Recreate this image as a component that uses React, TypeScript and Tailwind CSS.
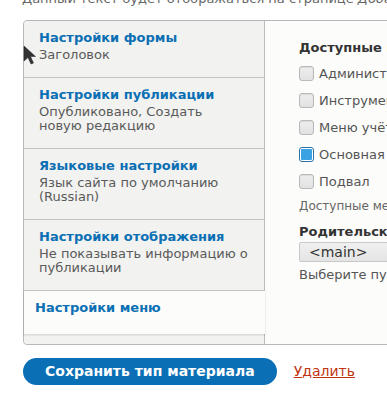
import React from "react";

const tabs = [
  { title: "Настройки формы", desc: ["Заголовок"] },
  { title: "Настройки публикации", desc: ["Опубликовано, Создать", "новую редакцию"] },
  { title: "Языковые настройки", desc: ["Язык сайта по умолчанию", "(Russian)"] },
  { title: "Настройки отображения", desc: ["Не показывать информацию о", "публикации"] },
];

const menus = [
  { label: "Администраторы", checked: false },
  { label: "Инструменты", checked: false },
  { label: "Меню учётной записи", checked: false },
  { label: "Основная навигация", checked: true },
  { label: "Подвал", checked: false },
];

function Checkbox({ checked }: { checked: boolean }) {
  if (checked) {
    return (
      <span className="w-[15px] h-[15px] shrink-0 rounded-[3px] border border-[#2a72a8] bg-white p-[1px] flex">
        <span className="flex-1 rounded-[1px] bg-[#3aa3e3]" />
      </span>
    );
  }
  return (
    <span className="w-[15px] h-[15px] shrink-0 rounded-[3px] border border-[#b9b9b9] bg-gradient-to-b from-[#eeeeee] to-[#e2e2e2] shadow-[inset_0_1px_1px_rgba(0,0,0,0.08)]" />
  );
}

export default function App() {
  return (
    <div className="relative w-[387px] h-[402px] overflow-hidden bg-white font-['DejaVu_Sans',sans-serif]">
      <p className="-mt-[10px] ml-[22px] text-[13px] leading-[18px] text-[#666] whitespace-nowrap">
        Данный текст будет отображаться на странице <em>Добавить материал</em>.
      </p>

      <div className="mt-[12px] ml-[23px] w-[620px] flex border border-[#b8b8b8] rounded-[4px] bg-[#fcfcfa]">
        <ul className="w-[241px] shrink-0 bg-[#f2f2f0] border-r border-[#bcbcbc] pb-[10px] rounded-l-[4px]">
          {tabs.map((t) => (
            <li key={t.title} className="pl-[15px] pt-[9px] pb-[15px] border-b border-[#c4c4c4]">
              <div className="text-[13px] leading-[16px] font-bold text-[#0b6fb4] whitespace-nowrap">{t.title}</div>
              <div className="mt-[2px] text-[13px] leading-[14px] text-[#5a5a5a]">
                {t.desc.map((d) => (
                  <div key={d} className="whitespace-nowrap">{d}</div>
                ))}
              </div>
            </li>
          ))}
          <li className="relative -mr-px pl-[11px] pt-[9px] pb-[18px] bg-[#fcfcfa] shadow-[0_1px_2px_rgba(0,0,0,0.15)]">
            <div className="text-[13px] leading-[16px] font-bold text-[#0b6fb4] whitespace-nowrap">Настройки меню</div>
          </li>
        </ul>

        <div className="flex-1 pl-[34px] pt-[19px] text-[#555]">
          <div className="text-[13px] leading-[16px] font-bold text-[#333] whitespace-nowrap">Доступные меню</div>
          <div className="mt-[4px]">
            {menus.map((m) => (
              <div key={m.label} className="h-[27px] flex items-center gap-[5px]">
                <Checkbox checked={m.checked} />
                <span className="text-[13px] text-[#555] whitespace-nowrap">{m.label}</span>
              </div>
            ))}
          </div>
          <div className="mt-[4px] text-[12px] leading-[15px] text-[#666] whitespace-nowrap">
            Доступные меню, в которых можно размещать ссылки на этот тип материала.
          </div>
          <div className="mt-[10px] text-[13px] leading-[16px] font-bold text-[#333] whitespace-nowrap">
            Родительский пункт меню по умолчанию
          </div>
          <div className="mt-[2px] h-[20px] w-[260px] flex items-center pl-[9px] rounded-[2px] border border-[#c8c8c8] bg-gradient-to-b from-[#f0f0f0] to-[#e4e4e4] text-[14px] text-[#333]">
            &lt;main&gt;
          </div>
          <div className="mt-[4px] text-[13px] leading-[18px] text-[#555] whitespace-nowrap">
            Выберите пункт, который будет родительским по умолчанию.
          </div>
        </div>
      </div>

      <div className="mt-[13px] ml-[23px] flex items-center gap-[17px]">
        <button className="h-[27px] px-[22px] rounded-full bg-[#0a6fb5] text-white text-[14px] font-bold whitespace-nowrap">
          Сохранить тип материала
        </button>
        <a className="text-[14px] text-[#c1330f] underline whitespace-nowrap">Удалить</a>
      </div>

      <svg className="absolute left-[22px] top-[44px]" width="16" height="24" viewBox="0 0 16 24">
        <path d="M2 2 L2 17 L6 13.5 L9 20 L11.5 19 L8.5 12.5 L13.5 12.5 Z" fill="#333" stroke="#222" strokeWidth="0.5" />
      </svg>
    </div>
  );
}
